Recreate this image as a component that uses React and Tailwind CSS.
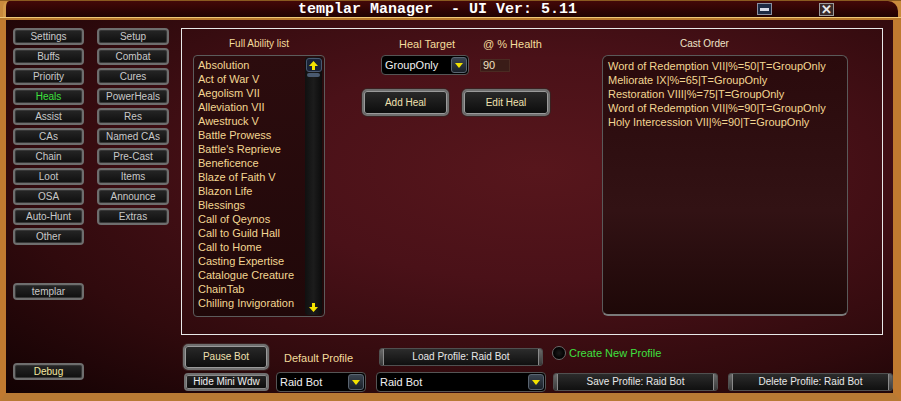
import React from "react";

const abilities = [
  "Absolution",
  "Act of War V",
  "Aegolism VII",
  "Alleviation VII",
  "Awestruck V",
  "Battle Prowess",
  "Battle's Reprieve",
  "Beneficence",
  "Blaze of Faith V",
  "Blazon Life",
  "Blessings",
  "Call of Qeynos",
  "Call to Guild Hall",
  "Call to Home",
  "Casting Expertise",
  "Catalogue Creature",
  "ChainTab",
  "Chilling Invigoration",
];

const castOrder = [
  "Word of Redemption VII|%=50|T=GroupOnly",
  "Meliorate IX|%=65|T=GroupOnly",
  "Restoration VIII|%=75|T=GroupOnly",
  "Word of Redemption VII|%=90|T=GroupOnly",
  "Holy Intercession VII|%=90|T=GroupOnly",
];

const leftCol = ["Settings", "Buffs", "Priority", "Heals", "Assist", "CAs", "Chain", "Loot", "OSA", "Auto-Hunt", "Other"];
const rightCol = ["Setup", "Combat", "Cures", "PowerHeals", "Res", "Named CAs", "Pre-Cast", "Items", "Announce", "Extras"];

function SideBtn({ label, w = "w-[71px]", color = "text-[#c9c9c9]" }) {
  return (
    <div
      className={`${w} h-[17px] shrink-0 rounded-[4px] border-2 border-[#6e6e6e] bg-gradient-to-b from-[#262626] to-[#0f0f0f] shadow-[inset_0_0_0_1px_#363636] flex items-center justify-center text-[10px] leading-none ${color}`}
    >
      {label}
    </div>
  );
}

function BigBtn({ label, w, h, color = "text-[#f0e0b0]" }) {
  return (
    <div
      className={`${w} ${h} shrink-0 rounded-[5px] border-2 border-[#6f6f6f] bg-gradient-to-b from-[#2a2a2a] to-[#0c0c0c] shadow-[inset_0_0_0_1px_#9a9a9a,0_0_0_1px_#3a2020] flex items-center justify-center text-[10px] leading-none ${color}`}
    >
      {label}
    </div>
  );
}

function BarBtn({ label, w }) {
  return (
    <div className={`${w} h-[18px] shrink-0 flex items-stretch rounded-[3px] border border-[#505050] bg-[#1a1a1a]`}>
      <div className="w-[4px] border-r border-[#8a8a8a] bg-gradient-to-b from-[#6a6a6a] to-[#3a3a3a] rounded-l-[2px]" />
      <div className="flex-1 bg-gradient-to-b from-[#2c2c2c] to-[#101010] flex items-center justify-center text-[10px] leading-none text-[#e8e8e8]">
        {label}
      </div>
      <div className="w-[4px] border-l border-[#8a8a8a] bg-gradient-to-b from-[#6a6a6a] to-[#3a3a3a] rounded-r-[2px]" />
    </div>
  );
}

function Arrow({ down }) {
  return (
    <svg width="9" height="9" viewBox="0 0 9 9">
      {down ? (
        <path d="M3 0h3v4h3L4.5 9 0 4h3z" fill="#f5e400" />
      ) : (
        <path d="M3 9h3V5h3L4.5 0 0 5h3z" fill="#f5e400" />
      )}
    </svg>
  );
}

function Dropdown({ value, w }) {
  return (
    <div className={`${w} h-[20px] shrink-0 flex items-center rounded-[4px] border border-[#555] bg-black`}>
      <span className="flex-1 pl-[3px] text-[11px] leading-none text-[#f0f0f0]">{value}</span>
      <div className="w-[16px] h-[16px] mr-[1px] rounded-[3px] border border-[#5a6470] bg-gradient-to-b from-[#3a4450] to-[#1a2028] flex items-center justify-center">
        <svg width="8" height="5" viewBox="0 0 8 5">
          <path d="M0 0h8L4 5z" fill="#f2e200" />
        </svg>
      </div>
    </div>
  );
}

export default function App() {
  return (
    <div
      className="w-[901px] h-[401px] flex flex-col overflow-hidden bg-black"
      style={{ fontFamily: "'Liberation Sans', Arial, sans-serif" }}
    >
      {/* Title bar */}
      <div className="h-[20px] shrink-0 flex flex-col bg-[#c98a3c]">
        <div className="h-[1px] bg-[#8a5a20]" />
        <div className="h-[16px] mx-[3px] flex items-center rounded-tl-[6px] rounded-tr-[10px] border-l-[3px] border-[#d49a48] bg-gradient-to-b from-[#440808] to-[#200202]">
          <span
            className="pl-[292px] text-[15px] font-bold leading-none text-white whitespace-pre"
            style={{ fontFamily: "'Liberation Mono', 'DejaVu Sans Mono', monospace" }}
          >
            templar Manager  - UI Ver: 5.11
          </span>
          <div className="ml-[180px] w-[15px] h-[12px] border border-[#8a8fa0] bg-[#1c2a44] flex items-center justify-center">
            <div className="w-[9px] h-[3px] bg-[#d8dce8]" />
          </div>
          <div className="ml-[47px] w-[15px] h-[13px] border border-[#9a9a9a] bg-[#3a2a2a] flex items-center justify-center text-[13px] font-bold leading-none text-[#e8e8e8]">
            ✕
          </div>
        </div>
        <div className="h-[1px] bg-[#f0c878]" />
        <div className="h-[2px] bg-[#b8782c]" />
      </div>

      {/* Body */}
      <div className="flex-1 flex border-l-[6px] border-r-[8px] border-b-[8px] border-l-[#c07a30] border-r-[#c07a30] border-b-[#b87a34] bg-[radial-gradient(ellipse_at_60%_40%,#57161c_0%,#4a1118_35%,#300a0d_70%,#120203_100%)]">
        {/* Sidebar */}
        <div className="w-[175px] shrink-0 flex pl-[7px] pt-[8px] gap-[13px]">
          <div className="flex flex-col">
            <div className="flex flex-col gap-[3px]">
              {leftCol.map((l) => (
                <SideBtn key={l} label={l} color={l === "Heals" ? "text-[#3fe03f]" : "text-[#c9c9c9]"} />
              ))}
            </div>
            <div className="mt-[38px]">
              <SideBtn label="templar" />
            </div>
            <div className="mt-[63px]">
              <SideBtn label="Debug" color="text-[#f2e8a0]" />
            </div>
          </div>
          <div className="flex flex-col gap-[3px]">
            {rightCol.map((l) => (
              <SideBtn key={l} label={l} w="w-[72px]" />
            ))}
          </div>
        </div>

        {/* Main column */}
        <div className="flex-1 flex flex-col pt-[8px]">
          <div className="w-[702px] h-[307px] border border-[#e8e8e8] flex">
            {/* Ability list */}
            <div className="ml-[11px] w-[132px] flex flex-col pt-[8px]">
              <div className="h-[14px] mb-[4px] text-center text-[10px] leading-[14px] text-[#f4dc9c]">Full Ability list</div>
              <div className="h-[262px] flex rounded-[4px] border border-[#5c5c5c] bg-gradient-to-b from-[#2c0c0e] to-[#200809]">
                <div className="flex-1 pl-[4px] pt-[2px] flex flex-col">
                  {abilities.map((a) => (
                    <div key={a} className="h-[14px] text-[11px] leading-[14px] text-[#f3d692] whitespace-nowrap">
                      {a}
                    </div>
                  ))}
                </div>
                <div className="w-[17px] mr-[2px] my-[1px] flex flex-col items-center bg-gradient-to-r from-[#101010] via-[#1c1c1c] to-[#0c0c0c] rounded-[3px]">
                  <div className="w-[16px] h-[14px] mt-[1px] rounded-[3px] border border-[#4a5870] bg-[#1a2438] flex items-center justify-center">
                    <Arrow />
                  </div>
                  <div className="w-[13px] h-[4px] mt-[1px] rounded-[2px] bg-[#4a5a70]" />
                  <div className="flex-1" />
                  <div className="w-[16px] h-[14px] mb-[1px] flex items-center justify-center">
                    <Arrow down />
                  </div>
                </div>
              </div>
            </div>

            {/* Heal settings */}
            <div className="ml-[37px] w-[188px] flex flex-col pt-[8px]">
              <div className="h-[14px] flex text-[11px] leading-[14px] text-[#f4dc9c]">
                <span className="pl-[37px]">Heal Target</span>
                <span className="pl-[28px]">@ % Health</span>
              </div>
              <div className="mt-[4px] pl-[19px] flex items-center">
                <Dropdown value="GroupOnly" w="w-[88px]" />
                <div className="ml-[11px] w-[30px] h-[13px] border border-[#4a2a22] bg-[#3a1c18] pl-[2px] text-[11px] leading-[11px] text-[#f0e0c0]">
                  90
                </div>
              </div>
              <div className="mt-[14px] flex gap-[13px]">
                <BigBtn label="Add Heal" w="w-[87px]" h="h-[27px]" />
                <BigBtn label="Edit Heal" w="w-[88px]" h="h-[27px]" />
              </div>
            </div>

            {/* Cast order */}
            <div className="ml-[52px] w-[246px] flex flex-col pt-[8px]">
              <div className="h-[14px] mb-[4px] pl-[78px] text-[10px] leading-[14px] text-[#f0e4c8]">Cast Order</div>
              <div className="h-[261px] rounded-[6px] border border-[#5a5a5a] border-b-[2px] border-b-[#7a7a7a] bg-[linear-gradient(180deg,#2a0a0c_0%,#321214_60%,#1e0808_100%)] pl-[5px] pt-[3px]">
                {castOrder.map((c, i) => (
                  <div key={i} className="h-[14px] text-[11px] leading-[14px] text-[#f3d692] whitespace-nowrap">
                    {c}
                  </div>
                ))}
              </div>
            </div>
          </div>

          {/* Bottom controls */}
          <div className="mt-[9px] flex items-start">
            <div className="ml-[2px]">
              <BigBtn label="Pause Bot" w="w-[86px]" h="h-[26px]" color="text-[#f0e0b0]" />
            </div>
            <div className="w-[107px] pl-[15px] pt-[7px] text-[11px] leading-[14px] text-[#f4dc9c]">Default Profile</div>
            <div className="ml-[3px] mt-[4px]">
              <BarBtn label="Load Profile: Raid Bot" w="w-[164px]" />
            </div>
            <div className="ml-[9px] mt-[2px] w-[14px] h-[14px] rounded-full border border-[#6a6a6a] bg-[radial-gradient(circle,#1a1a1a_0%,#000_70%)]" />
            <div className="ml-[3px] mt-[2px] text-[11px] leading-[14px] text-[#3fe03f]">Create New Profile</div>
          </div>
          <div className="mt-[2px] flex items-start">
            <div className="ml-[3px] mt-[1px] w-[85px] h-[18px] rounded-[4px] border-2 border-[#6f6f6f] bg-gradient-to-b from-[#262626] to-[#0c0c0c] shadow-[inset_0_0_0_1px_#8a8a8a] flex items-center justify-center text-[10px] leading-none text-[#f0f0f0]">
              Hide Mini Wdw
            </div>
            <div className="ml-[7px]">
              <Dropdown value="Raid Bot" w="w-[90px]" />
            </div>
            <div className="ml-[10px]">
              <Dropdown value="Raid Bot" w="w-[170px]" />
            </div>
            <div className="ml-[7px] mt-[1px]">
              <BarBtn label="Save Profile: Raid Bot" w="w-[165px]" />
            </div>
            <div className="ml-[10px] mt-[1px]">
              <BarBtn label="Delete Profile: Raid Bot" w="w-[165px]" />
            </div>
          </div>
        </div>
      </div>
    </div>
  );
}
